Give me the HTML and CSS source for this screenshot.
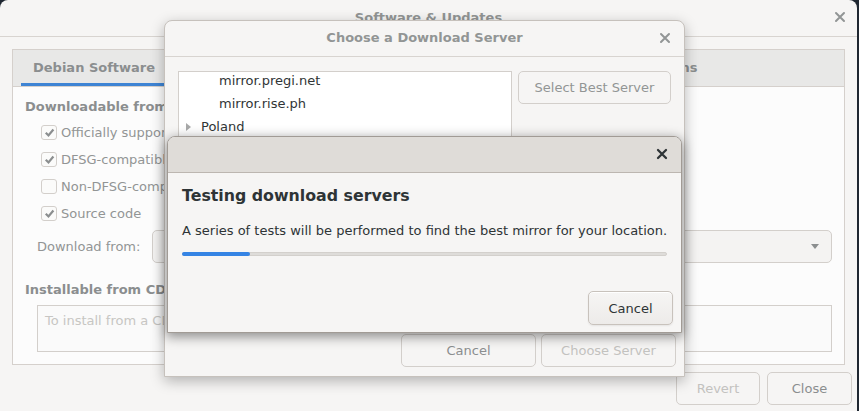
FILE: index.html
```html
<!DOCTYPE html>
<html lang="en">
<head>
    <meta charset="UTF-8">
    <title>Software &amp; Updates</title>
    <link rel="stylesheet" href="styles.css">
</head>
<body>
    <div class="desktop">
        <!-- main window -->
        <div class="window main-window">
            <div class="headerbar">
                <span class="title">Software &amp; Updates</span>
                <svg class="x-icon main-close" viewBox="0 0 16 16"><path d="M4 4l8 8M12 4l-8 8"/></svg>
            </div>
            <div class="main-body">
                <div class="notebook">
                    <div class="tabs">
                        <div class="tab active">Debian Software</div>
                        <div class="tab">Other Software</div>
                        <div class="tab">Updates</div>
                        <div class="tab">Authentication</div>
                        <div class="tab">Developer Options</div>
                    </div>
                    <div class="page">
                        <div class="heading">Downloadable from the Internet</div>
                        <div class="checks">
                            <div class="check">
                                <span class="box"><svg viewBox="0 0 14 14"><path d="M3 7.3l2.9 2.9L11.2 3.8"/></svg></span>
                                Officially supported (main)
                            </div>
                            <div class="check">
                                <span class="box"><svg viewBox="0 0 14 14"><path d="M3 7.3l2.9 2.9L11.2 3.8"/></svg></span>
                                DFSG-compatible Software with Non-Free Dependencies (contrib)
                            </div>
                            <div class="check">
                                <span class="box"></span>
                                Non-DFSG-compatible Software (non-free)
                            </div>
                            <div class="check">
                                <span class="box"><svg viewBox="0 0 14 14"><path d="M3 7.3l2.9 2.9L11.2 3.8"/></svg></span>
                                Source code
                            </div>
                        </div>
                        <div class="download-row">
                            <span>Download from:</span>
                            <div class="combo">
                                <span>Main server</span>
                                <span class="arrow"></span>
                            </div>
                        </div>
                        <div class="heading cd-heading">Installable from CD-ROM/DVD</div>
                        <div class="cd-box">To install from a CD-ROM or DVD, insert the medium into the drive.</div>
                    </div>
                </div>
                <div class="actions">
                    <button class="btn insensitive revert">Revert</button>
                    <button class="btn close-btn">Close</button>
                </div>
            </div>
        </div>

        <!-- choose server dialog -->
        <div class="window choose-dialog">
            <div class="headerbar choose-header">
                <span class="title">Choose a Download Server</span>
                <svg class="x-icon choose-close" viewBox="0 0 16 16"><path d="M4 4l8 8M12 4l-8 8"/></svg>
            </div>
            <div class="choose-body">
                <div class="choose-top">
                    <div class="tree">
                        <div class="tree-inner">
                            <div class="row leaf">mirror.pregi.net</div>
                            <div class="row leaf">mirror.rise.ph</div>
                            <div class="row group"><span class="expander"></span>Poland</div>
                            <div class="row group"><span class="expander"></span>Portugal</div>
                            <div class="row group"><span class="expander"></span>Puerto Rico</div>
                            <div class="row group"><span class="expander"></span>Qatar</div>
                            <div class="row group"><span class="expander"></span>Romania</div>
                            <div class="row group"><span class="expander"></span>Russia</div>
                        </div>
                    </div>
                    <div class="side">
                        <button class="btn best">Select Best Server</button>
                    </div>
                </div>
                <div class="choose-actions">
                    <button class="btn wide">Cancel</button>
                    <button class="btn wide insensitive">Choose Server</button>
                </div>
            </div>
        </div>

        <!-- progress dialog -->
        <div class="window progress-dialog">
            <div class="progress-header">
                <svg class="x-icon progress-close" viewBox="0 0 16 16"><path d="M4 4l8 8M12 4l-8 8"/></svg>
            </div>
            <div class="progress-body">
                <div class="progress-title">Testing download servers</div>
                <div class="progress-text">A series of tests will be performed to find the best mirror for your location.</div>
                <div class="bar"><div class="bar-fill" style="width: 14%"></div></div>
                <div class="progress-actions">
                    <button class="btn active-btn">Cancel</button>
                </div>
            </div>
        </div>
    </div>
</body>
</html>
```

FILE: styles.css
```css
* {
    box-sizing: border-box;
}
body {
    margin: 0;
    font-family: 'DejaVu Sans', 'Noto Sans', sans-serif;
    font-size: 13px;
    background-color: #1f2731;
}
.desktop {
    position: relative;
    width: 859px;
    height: 411px;
    overflow: hidden;
}
.window {
    position: absolute;
    background-color: #f6f5f4;
}
.x-icon {
    width: 16px;
    height: 16px;
    fill: none;
    stroke: #929595;
    stroke-width: 2;
    stroke-linecap: round;
}

/* main window */
.main-window {
    left: 0;
    top: 0;
    width: 857px;
    height: 430px;
    border-radius: 8px 8px 0 0;
}
.headerbar {
    position: relative;
    height: 37px;
    border-bottom: 1px solid #d8d4d0;
    display: flex;
    align-items: center;
    justify-content: center;
}
.headerbar .title {
    font-weight: bold;
    color: #929595;
    margin-top: -2px;
}
.main-close {
    position: absolute;
    right: 9px;
    top: 9px;
}
.main-body {
    padding: 12px 12px 0 12px;
}
.notebook {
    border: 1px solid #d5d0cc;
    background-color: #fcfcfc;
}
.tabs {
    display: flex;
    height: 37px;
    background-color: #e8e8e7;
    border-bottom: 1px solid #d5d0cc;
    padding-left: 8px;
    overflow: hidden;
}
.tab {
    padding: 0 16px;
    font-weight: bold;
    color: #8b8e8f;
    line-height: 35px;
    white-space: nowrap;
    border-bottom: 3px solid transparent;
}
.tab.active {
    padding: 0 12px;
    border-bottom-color: #3e84d4;
}
.page {
    padding: 12px 12px 12px 12px;
}
.heading {
    font-weight: bold;
    color: #8b8e8f;
    line-height: 16px;
    white-space: nowrap;
}
.checks {
    margin-top: 4px;
    padding-left: 16px;
}
.check {
    display: flex;
    align-items: center;
    height: 27px;
    color: #929595;
    white-space: nowrap;
}
.box {
    width: 16px;
    height: 15px;
    margin-right: 4px;
    border: 1px solid #d3cfcb;
    border-radius: 3px;
    background-color: #fbfbfa;
    display: flex;
    align-items: center;
    justify-content: center;
}
.box svg {
    width: 13px;
    height: 13px;
    fill: none;
    stroke: #8b8e8f;
    stroke-width: 2.4;
}
.download-row {
    display: flex;
    align-items: center;
    gap: 12px;
    margin-top: 3px;
    padding-left: 12px;
    color: #929595;
    white-space: nowrap;
}
.combo {
    flex: 1;
    height: 33px;
    border: 1px solid #d3cfcb;
    border-radius: 5px;
    background-color: #f4f3f2;
    display: flex;
    align-items: center;
    justify-content: space-between;
    padding: 0 12px;
}
.arrow {
    width: 0;
    height: 0;
    border-left: 4px solid transparent;
    border-right: 4px solid transparent;
    border-top: 5px solid #8b8e8f;
}
.cd-heading {
    margin-top: 19px;
}
.cd-box {
    margin: 7px 0 0 12px;
    height: 47px;
    border: 1px solid #d3cfcb;
    background-color: #fafafa;
    padding: 7px 7px;
    color: #c7c6c3;
    line-height: 16px;
    white-space: nowrap;
    overflow: hidden;
}
.actions {
    display: flex;
    justify-content: flex-end;
    gap: 7px;
    margin-top: 7px;
    margin-right: -7px;
}
.btn {
    height: 33px;
    font-family: 'DejaVu Sans', sans-serif;
    font-size: 13px;
    color: #8b8e8f;
    background-color: #f6f5f4;
    border: 1px solid #d3cfcb;
    border-radius: 5px;
    padding: 0 12px;
}
.btn.insensitive {
    color: #c3c2bf;
}
.revert {
    width: 84px;
}
.close-btn {
    width: 85px;
}

/* choose server dialog */
.choose-dialog {
    left: 164px;
    top: 20px;
    width: 521px;
    height: 357px;
    border: 1px solid #c6c1bc;
    border-radius: 8px 8px 0 0;
    box-shadow: 0 4px 14px rgba(0, 0, 0, 0.28);
    display: flex;
    flex-direction: column;
}
.choose-header {
    height: 36px;
    flex-shrink: 0;
}
.choose-close {
    position: absolute;
    right: 11px;
    top: 9px;
}
.choose-body {
    flex: 1;
    display: flex;
    flex-direction: column;
    padding: 14px 8px 9px 13px;
}
.choose-top {
    flex: 1;
    display: flex;
    gap: 6px;
    margin-right: 5px;
}
.tree {
    width: 334px;
    border: 1px solid #d3cfcb;
    background-color: #fff;
    overflow: hidden;
}
.tree-inner {
    margin-top: -3px;
}
.row {
    height: 23px;
    line-height: 23px;
    color: #303536;
    white-space: nowrap;
}
.row.leaf {
    padding-left: 40px;
}
.row.group {
    padding-left: 7px;
    display: flex;
    align-items: center;
}
.expander {
    width: 0;
    height: 0;
    border-top: 4px solid transparent;
    border-bottom: 4px solid transparent;
    border-left: 5px solid #a8a9a9;
    margin-right: 10px;
}
.side {
    flex: 1;
}
.best {
    width: 153px;
    color: #929595;
}
.choose-actions {
    display: flex;
    justify-content: flex-end;
    gap: 5px;
    margin-top: 12px;
}
.btn.wide {
    width: 135px;
}

/* progress dialog */
.progress-dialog {
    left: 167px;
    top: 136px;
    width: 515px;
    height: 197px;
    border: 1px solid #a19b95;
    border-radius: 8px 8px 0 0;
    box-shadow: 0 3px 12px 1px rgba(0, 0, 0, 0.42);
    display: flex;
    flex-direction: column;
}
.progress-header {
    position: relative;
    height: 36px;
    flex-shrink: 0;
    background-color: #dfdcd8;
    border-bottom: 1px solid #bcb6b0;
    border-radius: 7px 7px 0 0;
}
.progress-close {
    position: absolute;
    right: 11px;
    top: 9px;
    stroke: #2e3436;
    stroke-width: 2.3;
}
.progress-body {
    flex: 1;
    display: flex;
    flex-direction: column;
    padding: 13px 14px 7px 14px;
    color: #2e3436;
}
.progress-title {
    font-size: 15.8px;
    font-weight: bold;
    line-height: 20px;
}
.progress-text {
    margin-top: 17px;
    line-height: 16px;
    white-space: nowrap;
}
.bar {
    margin-top: 13px;
    height: 4px;
    background-color: #dedcd9;
    border: 1px solid #d3d0cc;
    border-radius: 2px;
}
.bar-fill {
    height: 4px;
    margin-top: -1px;
    margin-left: -1px;
    background-color: #3584e4;
    border-radius: 2px;
}
.progress-actions {
    margin-top: auto;
    display: flex;
    justify-content: flex-end;
    margin-right: -6px;
}
.btn.active-btn {
    width: 85px;
    height: 34px;
    color: #2e3436;
    background: linear-gradient(#f6f5f4, #edebe9);
    border-color: #c8c2bc;
    box-shadow: inset 0 1px #fff, 0 1px 2px rgba(0, 0, 0, 0.07);
}
```
